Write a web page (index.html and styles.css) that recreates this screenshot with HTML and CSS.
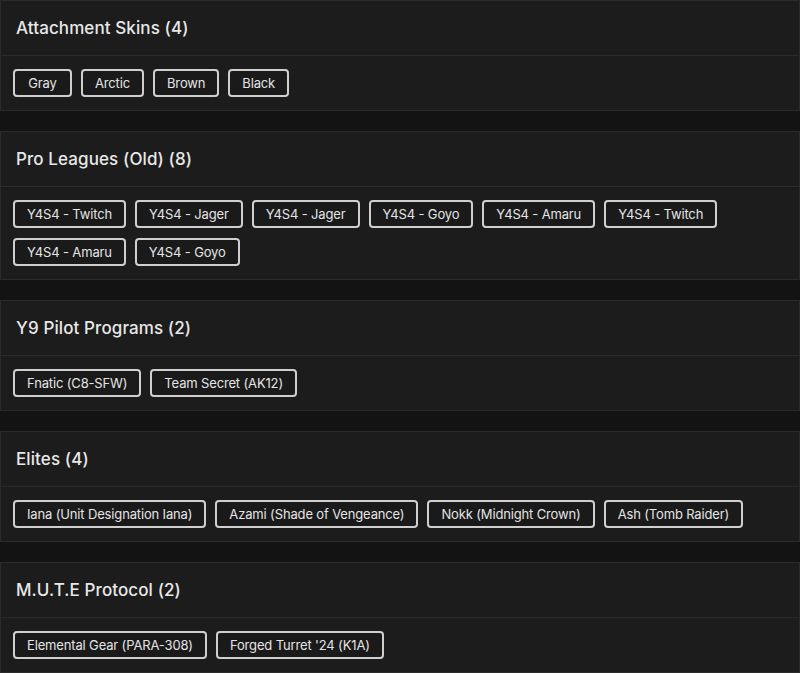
FILE: index.html
```html
<!DOCTYPE html>
<html>
<head>
<meta charset="utf-8">
<link rel="stylesheet" href="styles.css">
</head>
<body>
<div class="list">
  <section class="card">
    <div class="card-head"><h2>Attachment Skins (4)</h2></div>
    <div class="card-body">
      <button class="chip">Gray</button>
      <button class="chip">Arctic</button>
      <button class="chip">Brown</button>
      <button class="chip">Black</button>
    </div>
  </section>
  <section class="card">
    <div class="card-head"><h2>Pro Leagues (Old) (8)</h2></div>
    <div class="card-body">
      <button class="chip">Y4S4 - Twitch</button>
      <button class="chip">Y4S4 - Jager</button>
      <button class="chip">Y4S4 - Jager</button>
      <button class="chip">Y4S4 - Goyo</button>
      <button class="chip">Y4S4 - Amaru</button>
      <button class="chip">Y4S4 - Twitch</button>
      <button class="chip">Y4S4 - Amaru</button>
      <button class="chip">Y4S4 - Goyo</button>
    </div>
  </section>
  <section class="card">
    <div class="card-head"><h2>Y9 Pilot Programs (2)</h2></div>
    <div class="card-body">
      <button class="chip">Fnatic (C8-SFW)</button>
      <button class="chip">Team Secret (AK12)</button>
    </div>
  </section>
  <section class="card">
    <div class="card-head"><h2>Elites (4)</h2></div>
    <div class="card-body">
      <button class="chip">Iana (Unit Designation Iana)</button>
      <button class="chip">Azami (Shade of Vengeance)</button>
      <button class="chip">Nokk (Midnight Crown)</button>
      <button class="chip">Ash (Tomb Raider)</button>
    </div>
  </section>
  <section class="card">
    <div class="card-head"><h2>M.U.T.E Protocol (2)</h2></div>
    <div class="card-body">
      <button class="chip">Elemental Gear (PARA-308)</button>
      <button class="chip">Forged Turret '24 (K1A)</button>
    </div>
  </section>
</div>
</body>
</html>
```
FILE: styles.css
```css
html, body {
  margin: 0;
  padding: 0;
  background: #131313;
  font-family: Inter, "Open Sans", sans-serif;
  color: #e6e6e6;
  overflow: hidden;
}
.list {
  display: flex;
  flex-direction: column;
  gap: 20px;
}
.card {
  background: #1c1c1c;
  border: 1px solid #2b2b2b;
}
.card-head {
  height: 54px;
  display: flex;
  align-items: center;
  padding: 0 15px;
  border-bottom: 1px solid #2b2b2b;
}
.card-head h2 {
  margin: 0;
  font-size: 17px;
  font-weight: 500;
  color: #e8e8e8;
  letter-spacing: 0.1px;
}
.card-body {
  display: flex;
  flex-wrap: wrap;
  gap: 10px 9px;
  padding: 13px 12px;
}
.chip {
  height: 28px;
  min-width: 59px;
  padding: 0 12px;
  background: #1a1a1a;
  border: 2px solid #cfcfcf;
  border-radius: 4px;
  color: #e4e4e4;
  font-family: Inter, "Open Sans", sans-serif;
  font-size: 13px;
  font-weight: 400;
  letter-spacing: -0.15px;
}
```
